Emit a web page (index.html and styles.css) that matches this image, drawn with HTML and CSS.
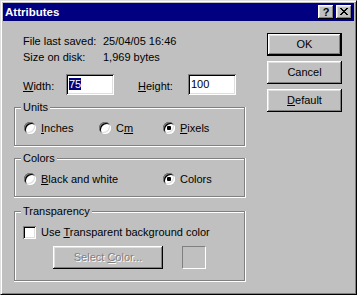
FILE: index.html
```html
<!DOCTYPE html>
<html lang="en">
<head>
    <meta charset="UTF-8">
    <title>Attributes</title>
    <link rel="stylesheet" href="styles.css">
</head>
<body>
    <div class="window">
        <div class="titlebar">
            <span class="title">Attributes</span>
            <div class="title-buttons">
                <span class="tbtn">?</span>
                <span class="tbtn">
                    <svg width="8" height="7" viewBox="0 0 8 7">
                        <path d="M0 0h2v1h-2zM6 0h2v1h-2zM1 1h2v1h-2zM5 1h2v1h-2zM2 2h4v1h-4zM3 3h2v1h-2zM2 4h4v1h-4zM1 5h2v1h-2zM5 5h2v1h-2zM0 6h2v1h-2zM6 6h2v1h-2z" fill="#000"/>
                    </svg>
                </span>
            </div>
        </div>
        <div class="content">
            <div class="main">
                <div class="info">
                    <div class="info-row"><span class="info-label">File last saved:</span><span>25/04/05 16:46</span></div>
                    <div class="info-row"><span class="info-label">Size on disk:</span><span>1,969 bytes</span></div>
                </div>
                <div class="size-row">
                    <span class="size-label width-label"><u>W</u>idth:</span>
                    <div class="field"><span class="sel">75</span></div>
                    <span class="size-label height-label"><u>H</u>eight:</span>
                    <div class="field">100</div>
                </div>

                <div class="group group-units">
                    <span class="group-title">Units</span>
                    <div class="options">
                        <div class="opt opt-inches"><span class="radio"></span><span><u>I</u>nches</span></div>
                        <div class="opt opt-cm"><span class="radio"></span><span>C<u>m</u></span></div>
                        <div class="opt"><span class="radio checked"></span><span><u>P</u>ixels</span></div>
                    </div>
                </div>

                <div class="group group-colors">
                    <span class="group-title">Colors</span>
                    <div class="options">
                        <div class="opt opt-bw"><span class="radio"></span><span><u>B</u>lack and white</span></div>
                        <div class="opt"><span class="radio checked"></span><span>Colors</span></div>
                    </div>
                </div>

                <div class="group group-transparency">
                    <span class="group-title">Transparency</span>
                    <div class="check-row"><span class="checkbox"></span><span>Use <u>T</u>ransparent background color</span></div>
                    <div class="select-row">
                        <button class="button button-select" disabled><span>Select <u>C</u>olor...</span></button>
                        <div class="swatch"></div>
                    </div>
                </div>
            </div>
            <div class="side">
                <button class="button button-default">OK</button>
                <button class="button">Cancel</button>
                <button class="button"><span><u>D</u>efault</span></button>
            </div>
        </div>
    </div>
</body>
</html>
```

FILE: styles.css
```css
body {
    margin: 0;
    font-family: "Liberation Sans", Arial, sans-serif;
    font-size: 11px;
    color: #000;
    background-color: #c0c0c0;
}

.window {
    width: 357px;
    height: 295px;
    box-sizing: border-box;
    background-color: #c0c0c0;
    border: 1px solid;
    border-color: #dfdfdf #000 #000 #dfdfdf;
    box-shadow: inset 1px 1px #fff, inset -1px -1px #808080;
    padding: 2px;
}

.titlebar {
    height: 18px;
    background-color: #000080;
    color: white;
    display: flex;
    align-items: center;
    justify-content: space-between;
    padding-left: 2px;
}

.title {
    font-weight: bold;
    font-size: 11.5px;
    line-height: 18px;
}

.title-buttons {
    display: flex;
    gap: 2px;
    margin-right: 2px;
}

.tbtn {
    width: 16px;
    height: 14px;
    box-sizing: border-box;
    background-color: #c0c0c0;
    color: #000;
    box-shadow: inset -1px -1px #000, inset 1px 1px #fff, inset -2px -2px #808080, inset 2px 2px #dfdfdf;
    display: flex;
    align-items: center;
    justify-content: center;
    font-weight: bold;
    font-size: 11px;
    line-height: 12px;
    padding-bottom: 1px;
}

.content {
    display: flex;
}

.main {
    margin-left: 11px;
    width: 232px;
}

.info {
    margin-top: 12px;
    padding-left: 9px;
}

.info-row {
    display: flex;
    line-height: 16px;
}

.info-label {
    width: 80px;
}

.size-row {
    display: flex;
    align-items: flex-start;
    margin-top: 9px;
    padding-left: 9px;
    height: 21px;
}

.size-label {
    line-height: 13px;
    margin-top: 6px;
}

.width-label {
    width: 43px;
}

.height-label {
    margin-left: 24px;
    width: 50px;
}

.field {
    width: 48px;
    height: 21px;
    box-sizing: border-box;
    background-color: white;
    box-shadow: inset 1px 1px #808080, inset -1px -1px #fff, inset 2px 2px #000, inset -2px -2px #dfdfdf;
    padding: 4px 3px 0;
    line-height: 13px;
}

.sel {
    background-color: #000080;
    color: white;
}

.group {
    position: relative;
    box-sizing: border-box;
    padding: 15px 0 0 10px;
    box-shadow: inset -1px -1px #fff, inset -2px -2px #808080, inset 1px 1px #808080, inset 2px 2px #fff;
}

.group-units {
    margin-top: 12px;
    height: 40px;
}

.group-colors {
    margin-top: 11px;
    height: 40px;
}

.group-transparency {
    margin-top: 13px;
    height: 71px;
}

.group-title {
    position: absolute;
    top: -6px;
    left: 7px;
    padding: 0 2px;
    line-height: 13px;
    background-color: #c0c0c0;
}

.options {
    display: flex;
}

.opt {
    display: flex;
    align-items: center;
    line-height: 12px;
}

.opt-inches {
    width: 75px;
}

.opt-cm {
    width: 64px;
}

.opt-bw {
    width: 139px;
}

.radio {
    position: relative;
    flex: none;
    width: 12px;
    height: 12px;
    margin-right: 5px;
    border-radius: 50%;
    background-color: white;
    box-shadow: inset 1px 1px #808080, inset -1px -1px #fff, inset 2px 2px #000, inset -2px -2px #dfdfdf;
}

.radio.checked::after {
    content: "";
    position: absolute;
    left: 4px;
    top: 4px;
    width: 4px;
    height: 4px;
    border-radius: 1px;
    background-color: #000;
}

.check-row {
    display: flex;
    align-items: center;
    line-height: 13px;
}

.checkbox {
    flex: none;
    width: 13px;
    height: 13px;
    margin-left: -1px;
    margin-right: 5px;
    background-color: white;
    box-shadow: inset 1px 1px #808080, inset -1px -1px #fff, inset 2px 2px #000, inset -2px -2px #dfdfdf;
}

.select-row {
    display: flex;
    margin-top: 7px;
    padding-left: 29px;
}

.swatch {
    width: 24px;
    height: 23px;
    box-sizing: border-box;
    margin-left: 19px;
    border: 1px solid;
    border-color: #808080 #fff #fff #808080;
}

.side {
    display: flex;
    flex-direction: column;
    gap: 5px;
    margin-left: 21px;
    margin-top: 12px;
}

.button {
    width: 75px;
    height: 23px;
    box-sizing: border-box;
    padding: 0;
    border: none;
    background-color: #c0c0c0;
    color: #000;
    font-family: inherit;
    font-size: 11px;
    line-height: 13px;
    box-shadow: inset -1px -1px #000, inset 1px 1px #fff, inset -2px -2px #808080, inset 2px 2px #dfdfdf;
    display: flex;
    align-items: center;
    justify-content: center;
}

.button-default {
    box-shadow: inset 0 0 0 1px #000, inset -2px -2px #000, inset 2px 2px #fff, inset -3px -3px #808080, inset 3px 3px #dfdfdf;
}

.button-select {
    width: 110px;
    color: #808080;
    text-shadow: 1px 1px 0 #fff;
}
```
